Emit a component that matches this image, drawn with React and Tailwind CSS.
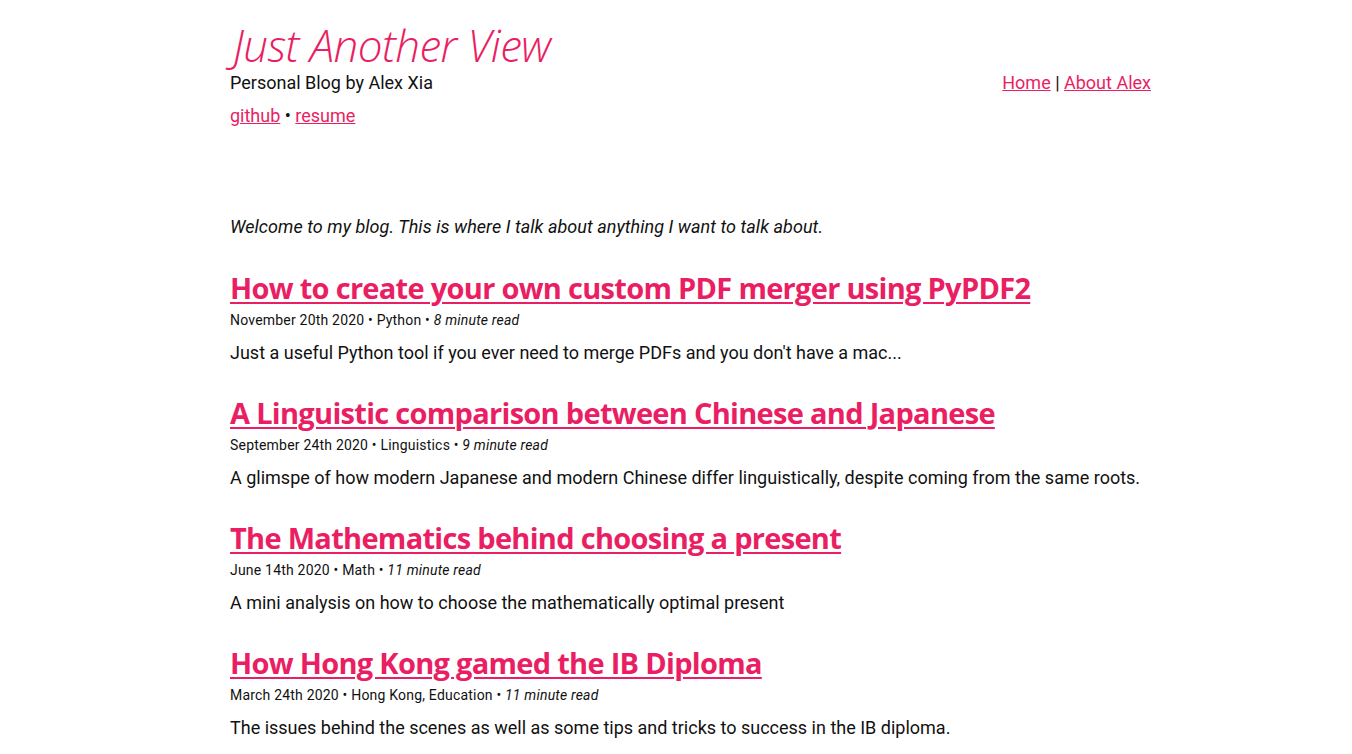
import React from "react";

const POSTS = [
  {
    title: "How to create your own custom PDF merger using PyPDF2",
    date: "November 20th 2020",
    tags: "Python",
    read: "8 minute read",
    excerpt: "Just a useful Python tool if you ever need to merge PDFs and you don't have a mac...",
  },
  {
    title: "A Linguistic comparison between Chinese and Japanese",
    date: "September 24th 2020",
    tags: "Linguistics",
    read: "9 minute read",
    excerpt: "A glimspe of how modern Japanese and modern Chinese differ linguistically, despite coming from the same roots.",
  },
  {
    title: "The Mathematics behind choosing a present",
    date: "June 14th 2020",
    tags: "Math",
    read: "11 minute read",
    excerpt: "A mini analysis on how to choose the mathematically optimal present",
  },
  {
    title: "How Hong Kong gamed the IB Diploma",
    date: "March 24th 2020",
    tags: "Hong Kong, Education",
    read: "11 minute read",
    excerpt: "The issues behind the scenes as well as some tips and tricks to success in the IB diploma.",
  },
];

const App = () => {
  return (
    <div className="min-h-screen bg-white text-[#111] font-['Roboto',sans-serif]">
      <div className="ml-[230px] w-[921px]">
        {/* cabecera */}
        <header className="pt-[23px] flex justify-between items-start">
          <div>
            <h1 className="text-[#e91e63] text-[44px] leading-[44px] font-light italic font-['Open_Sans',sans-serif] tracking-[-0.6px] ml-[3px]">
              Just Another View
            </h1>
            <p className="text-[18px] leading-[24px] mt-[4px]">Personal Blog by Alex Xia</p>
            <p className="text-[18px] leading-[24px] mt-[9px]">
              <a href="#" className="text-[#e91e63] underline">github</a> •{" "}
              <a href="#" className="text-[#e91e63] underline">resume</a>
            </p>
          </div>
          <nav className="text-[18px] leading-[24px] mt-[48px]">
            <a href="#" className="text-[#e91e63] underline">Home</a> |{" "}
            <a href="#" className="text-[#e91e63] underline">About Alex</a>
          </nav>
        </header>

        <p className="italic text-[18px] leading-[24px] mt-[87px] tracking-[0.05px]">
          Welcome to my blog. This is where I talk about anything I want to talk about.
        </p>

        <div className="mt-[31px] flex flex-col gap-[30px]">
          {POSTS.map((p, i) => (
            <article key={i}>
              <h2 className="text-[29px] leading-[36px] font-bold font-['Open_Sans',sans-serif] tracking-[-0.7px]">
                <a href="#" className="text-[#e91e63] underline decoration-2 underline-offset-[3px]">{p.title}</a>
              </h2>
              <p className="text-[14px] leading-[18px] mt-[5px] tracking-[0.2px]">
                {p.date} • {p.tags} • <em>{p.read}</em>
              </p>
              <p className="text-[18px] leading-[24px] mt-[12px]">{p.excerpt}</p>
            </article>
          ))}
        </div>
      </div>
    </div>
  );
};

export default App;
